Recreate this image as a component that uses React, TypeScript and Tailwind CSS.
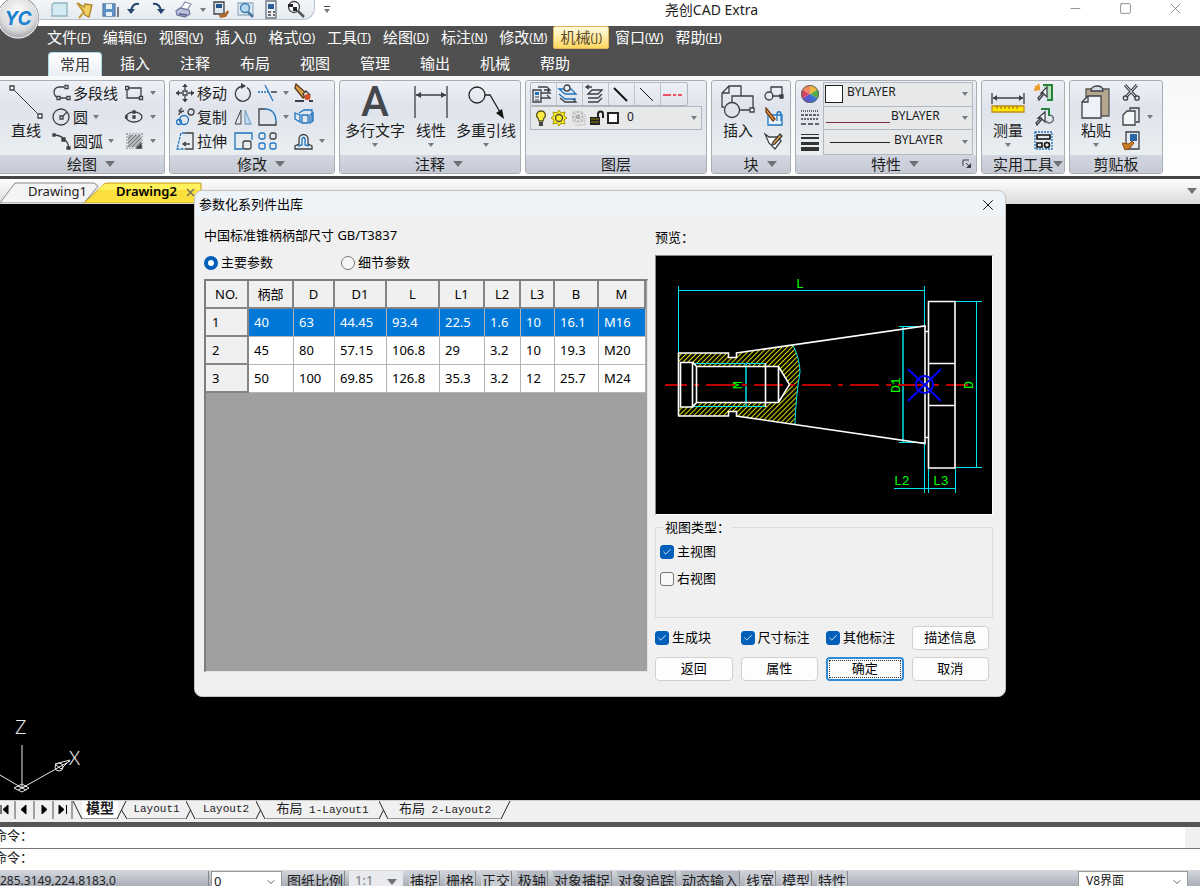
import { useState } from 'react'
import type { ReactNode } from 'react'
import clsx from 'clsx'
import { Check, ChevronDown, Minus, Square, X } from 'lucide-react'

const INK = '#3c4046'
const BLUE = '#1f74c0'

function Icon({
  w = 20,
  h = 20,
  children,
}: {
  w?: number
  h?: number
  children: ReactNode
}) {
  return (
    <svg
      width={w}
      height={h}
      viewBox={`0 0 ${w} ${h}`}
      fill="none"
      stroke={INK}
      strokeWidth="1.3"
      className="shrink-0"
      aria-hidden="true"
    >
      {children}
    </svg>
  )
}

function Caret({ big = false }: { big?: boolean }) {
  return big ? (
    <svg width="10" height="6" className="shrink-0" aria-hidden="true">
      <path d="M0 0h10L5 6z" fill="#6f7276" />
    </svg>
  ) : (
    <svg width="6" height="4" className="shrink-0" aria-hidden="true">
      <path d="M0 0h6L3 4z" fill="#777a7e" />
    </svg>
  )
}

/* ---------- small ribbon icons ---------- */

const icons = {
  polyline: (
    <Icon>
      <path d="M12 4H7a5 5 0 0 0-5 5q0 5 5 6M5 15h10" />
      <path d="M13 2.500h3v3h-3zM5 13.500h3v3H5zM15 13.500h3v3h-3z" fill="#fff" />
    </Icon>
  ),
  circle: (
    <Icon>
      <circle cx="9" cy="10" r="8" />
      <path d="M8 9h3v3H8zM10 10l5-5" />
    </Icon>
  ),
  arc: (
    <Icon>
      <path d="M2 4c8 0 14 6 15 13" />
      <path d="M1 3h2v2H1zM10 7h3v3h-3zM15 16h3v2h-3z" fill={INK} />
    </Icon>
  ),
  rect: (
    <Icon>
      <path d="M2 5h14v10H2z" />
      <path d="M0.500 3.500h3v3h-3zM14.500 13.500h3v3h-3z" fill="#fff" />
    </Icon>
  ),
  ellipse: (
    <Icon>
      <ellipse cx="9" cy="10" rx="8" ry="5" />
      <path d="M8 9h2v2H8zM0 9h2v2H0zM8 4h2v2H8z" fill={INK} />
    </Icon>
  ),
  hatch: (
    <Icon>
      <path d="M3 4h13v12H3z" fill="#b4b8bd" stroke="none" />
      <path
        d="M3 8l4-4M3 12l8-8M3 16L15 4M7 16l9-9M11 16l5-5"
        stroke="#6c7075"
        strokeWidth="1"
      />
      <path d="M1 3h17M1 17h17M2 2v16M17 2v16" stroke="#8c9095" strokeWidth="1" strokeDasharray="2 1" />
      <path d="M16 13v4h-4z" fill={INK} />
    </Icon>
  ),
  move: (
    <Icon>
      <path d="M7 8h4v4H7zM9 1v6M9 13v6M0 10h6M12 10h6" />
      <path d="M6 4l3-3 3 3zM6 16l3 3 3-3zM3 7l-3 3 3 3zM15 7l3 3-3 3z" fill={INK} stroke="none" />
    </Icon>
  ),
  copy: (
    <Icon>
      <circle cx="8" cy="13" r="4.500" stroke={BLUE} />
      <circle cx="3" cy="15" r="2.500" stroke={BLUE} />
      <circle cx="15" cy="5" r="3" />
      <path d="M3 8q0-4 5-4M6 1L3 4l3 2" />
    </Icon>
  ),
  stretch: (
    <Icon>
      <path d="M9 2h8v16H9" />
      <path d="M9 2H5L1 18h8" stroke={BLUE} strokeDasharray="3 1" />
      <path d="M14 13H8M10 11l-3 2 3 2" />
    </Icon>
  ),
  rotate: (
    <Icon>
      <path d="M7 3.500a7.500 7.500 0 1 0 6 1" />
      <path d="M7 0l5 3-5 3z" fill={INK} stroke="none" />
    </Icon>
  ),
  mirror: (
    <Icon>
      <path d="M7 3v14H1z" strokeWidth="1" />
      <path d="M11 3v14h6z" fill="#bcdcf2" stroke="#86abc8" />
    </Icon>
  ),
  scale: (
    <Icon>
      <path d="M9 18H1V2h17v7" stroke={BLUE} />
      <rect x="9" y="10" width="8" height="8" rx="2" />
    </Icon>
  ),
  trim: (
    <Icon>
      <path d="M0 9h11" stroke={BLUE} strokeDasharray="2 1" />
      <path d="M7 2l8 16" stroke={BLUE} />
      <path d="M13 9h6" />
    </Icon>
  ),
  fillet: (
    <Icon>
      <path d="M7 2H1v16h17v-4" />
      <path d="M7 2c7 0 11 5 11 12" stroke={BLUE} />
    </Icon>
  ),
  array: (
    <Icon>
      <rect x="1" y="2" width="6" height="6" rx="2" stroke={BLUE} />
      <rect x="1" y="12" width="6" height="6" rx="2" stroke={BLUE} />
      <rect x="12" y="2" width="6" height="6" rx="2" />
      <rect x="12" y="12" width="6" height="6" rx="2" stroke={BLUE} />
    </Icon>
  ),
  erase: (
    <Icon>
      <path d="M2 1l11 10-4 4L1 5z" fill="#dca04a" stroke="#5a3a18" />
      <path d="M9 11l3-3 4 4-4 4z" fill="#f3e9d0" />
      <circle cx="13.500" cy="14" r="3" fill="#d4532a" stroke="none" />
      <path d="M1 18h9M15 18h4" strokeWidth="2" />
    </Icon>
  ),
  explode: (
    <Icon>
      <path d="M5 6l5-3h8v3M18 6v8" stroke={BLUE} />
      <path d="M8 8h6v8H8zM16 8l3-2v8l-3 2zM1 6l5 2v7l-5-3z" stroke={BLUE} />
    </Icon>
  ),
  offset: (
    <Icon>
      <path d="M1 18h17v-3l-4-2V8a4.500 4.500 0 0 0-9 0v5l-4 2z" />
      <path d="M4 15l4-1V8a1.500 1.500 0 0 1 3 0v6l4 1" stroke={BLUE} />
    </Icon>
  ),
  block: (
    <Icon>
      <path d="M7 9V4h11v9H8" />
      <circle cx="5" cy="13" r="4" />
      <path d="M16 12h3v3h-3z" fill={INK} />
    </Icon>
  ),
  blockEdit: (
    <Icon>
      <path d="M4 8h14v10H4z" stroke={BLUE} fill="#e8f1fa" />
      <path d="M13 14V7c0-3 4-3 4 0v7" stroke={BLUE} />
      <path d="M2 1l9 11-2 2-7-9z" fill="#e3a646" stroke="#7b3b18" />
    </Icon>
  ),
  attribute: (
    <Icon>
      <path d="M1 3l4 3h9l3 4-6 8-6-6z" fill="#fff" />
      <path d="M18 5l-7 8-3 1 1-3 7-8z" fill="#e59b3c" />
    </Icon>
  ),
  quickSelect: (
    <Icon>
      <path d="M9 2h9v15h-5" stroke="#27833b" strokeWidth="2" fill="#b8e4bd" />
      <path d="M13 4v10l-3-3-5 6-1-2 5-5H7z" fill="#fff" />
      <path d="M1 3l5 4M5 1L2 8M0 7l6-3" stroke="#ec9a24" strokeWidth="2" />
    </Icon>
  ),
  selectAll: (
    <Icon>
      <path d="M7 2h8v7" stroke="#27833b" strokeWidth="2" />
      <path d="M11 5v10l-3-3-5 6-1-2 5-5H4z" fill="#fff" />
      <path d="M12 14a4 4 0 1 0 4-6" stroke="#6c7075" strokeWidth="1.600" />
    </Icon>
  ),
  idPoint: (
    <Icon>
      <path d="M1 1h17v17H1z" stroke={BLUE} strokeDasharray="2 1" />
      <path d="M3 4h13v4H3zM3 12h5v4H3z" stroke="#111" strokeWidth="1.600" />
      <circle cx="13" cy="14" r="2.500" stroke="#111" strokeWidth="1.600" />
    </Icon>
  ),
  cut: (
    <Icon>
      <path d="M3 2l11 12M15 2L4 14" strokeWidth="3" />
      <path d="M3 2l11 12M15 2L4 14" stroke="#f2f4f6" strokeWidth="1" />
      <circle cx="3.500" cy="15" r="2.200" />
      <circle cx="15" cy="15" r="2.200" />
    </Icon>
  ),
  copyClip: (
    <Icon>
      <path d="M8 3V1h9v14h-3" />
      <path d="M1 8l4-4h8v14H1z" fill="#f4f6f8" />
    </Icon>
  ),
  matchProps: (
    <Icon>
      <path d="M4 1h13v17H4z" fill="#e6eaef" />
      <path d="M8 3h7v7H8z" fill="#2b67a5" stroke="none" />
      <path d="M0 12l7 1 3-3 2 2-4 5-5 2z" fill="#c97b2c" stroke="#8b4d14" strokeWidth="1" />
    </Icon>
  ),
}

/* ---------- header ---------- */

function QuickIcons() {
  return (
    <div className="flex h-5 items-center gap-[5px] rounded-br-xl border-b border-r border-[#b9c1c9] bg-linear-to-b from-[#f3f6f9] to-[#e6ebf0] pl-[30px] pr-2">
      <button aria-label="新建">
        <Icon>
          <path d="M4 3h13v13H2V5z" fill="#d4ebf2" stroke="#8fb4c4" />
        </Icon>
      </button>
      <button aria-label="打开">
        <Icon>
          <path d="M3 3l6 4 1-3 7 1-3 12-4-2z" fill="#f2cf63" stroke="#a9822b" />
          <path d="M2 3l7 9-5 6" stroke="#c49c3c" strokeWidth="2" />
        </Icon>
      </button>
      <button aria-label="保存">
        <Icon>
          <path d="M3 4h12v12H3z" fill="#5f93cc" stroke="#5b7fa8" />
          <path d="M6 4h6v5H6zM6 12h6v4H6z" fill="#e8f0f8" stroke="none" />
          <path d="M18 7v10" />
        </Icon>
      </button>
      <button aria-label="撤销">
        <Icon>
          <path d="M14 4c-5-1-8 3-8 8" stroke="#27456f" strokeWidth="2" />
          <path d="M2 9l4 5 4-5z" fill="#27456f" stroke="none" />
        </Icon>
      </button>
      <button aria-label="重做">
        <Icon>
          <path d="M3 4c5-1 8 3 8 8" stroke="#27456f" strokeWidth="2" />
          <path d="M7 9l4 5 4-5z" fill="#27456f" stroke="none" />
        </Icon>
      </button>
      <button aria-label="打印" className="flex items-center gap-[5px]">
        <Icon>
          <path d="M6 8l4-6 6 2-4 6z" fill="#fff" stroke="#8d93b4" />
          <path d="M1 11l4-3 9 2 1 4-5 3-8-2z" fill="#b9bfdb" stroke="#767ca3" />
          <path d="M4 14l8 1" stroke="#555b86" />
        </Icon>
        <Caret />
      </button>
      <button aria-label="特性匹配">
        <Icon>
          <path d="M3 2h10v12H3z" fill="#dfe6ee" />
          <path d="M5 4h6v4H5z" fill="#25578f" stroke="none" />
          <path d="M8 15l6-2 3-3 1 2-3 5-6 1z" fill="#b2662a" stroke="none" />
        </Icon>
      </button>
      <button aria-label="预览">
        <Icon>
          <path d="M2 3h15v12H2z" fill="#dce9f3" stroke="#9db2c4" />
          <circle cx="9" cy="8" r="4.500" fill="#b3d8f0" stroke="#3e78ac" />
          <path d="M12 12l5 5" stroke="#4877a0" strokeWidth="2.500" />
        </Icon>
      </button>
      <button aria-label="特性">
        <Icon>
          <path d="M5 1h10v17H5z" fill="#eef1f4" stroke="#6c7580" />
          <path d="M7 4h6v5H7z" fill="#2b5f9a" stroke="none" />
          <path d="M7 12h3M7 15h3M12 12h2M12 15h2" />
        </Icon>
      </button>
      <button aria-label="查找">
        <Icon>
          <circle cx="8" cy="7" r="5.500" fill="#fff" />
          <path d="M2 4h5v3H2zM7 7h4v4H7z" fill="#222" stroke="none" />
          <path d="M12 11l6 6" stroke="#555" strokeWidth="2.500" />
        </Icon>
      </button>
    </div>
  )
}

const menus = [
  ['文件', 'F'],
  ['编辑', 'E'],
  ['视图', 'V'],
  ['插入', 'I'],
  ['格式', 'O'],
  ['工具', 'T'],
  ['绘图', 'D'],
  ['标注', 'N'],
  ['修改', 'M'],
  ['机械', 'J'],
  ['窗口', 'W'],
  ['帮助', 'H'],
]

const ribbonTabs = ['常用', '插入', '注释', '布局', '视图', '管理', '输出', '机械', '帮助']

function Header() {
  const [tab, setTab] = useState('常用')

  return (
    <header className="relative">
      <div className="flex h-[26px] items-start bg-white pl-5">
        <QuickIcons />
        <button aria-label="自定义" className="ml-2 mt-[6px] flex w-[8px] flex-col items-center gap-[2px]">
          <span className="h-px w-[6px] bg-[#444]" />
          <Caret />
        </button>
        <h1 className="flex-1 pl-[42px] text-center text-[14px] leading-5 text-[#222]">
          尧创CAD Extra
        </h1>
        <div className="flex h-4 items-center text-[#777]">
          <button aria-label="最小化" className="flex w-[50px] justify-center">
            <Minus size={15} strokeWidth={1.2} />
          </button>
          <button aria-label="最大化" className="flex w-[50px] justify-center">
            <Square size={13} strokeWidth={1.5} />
          </button>
          <button aria-label="关闭" className="flex w-[50px] justify-center">
            <X size={17} strokeWidth={1.2} />
          </button>
        </div>
      </div>

      <div className="bg-[#505050] text-[15px] text-white">
        <nav className="flex h-[26px] items-start pl-[41px]">
          {menus.map(([name, key]) => (
            <button
              key={name}
              className={clsx(
                'flex h-[23px] items-center px-[6px] whitespace-nowrap',
                key === 'J' &&
                  'rounded-xs border border-[#e0b85a] bg-linear-to-b from-[#fffbe0] to-[#ffd75c] text-[#5a4a2a]',
              )}
            >
              <span className="text-[15px]">{name}</span>
              <span className="text-[12px]">
                (<u>{key}</u>)
              </span>
            </button>
          ))}
        </nav>
        <nav className="flex h-6 pl-[45px]">
          {ribbonTabs.map((name) => (
            <button
              key={name}
              onClick={() => setTab(name)}
              className={clsx(
                'mx-[3px] w-[54px] rounded-t-sm pb-[2px] text-[15px] leading-5',
                tab === name && 'border border-b-0 border-[#a9dce8] bg-linear-to-b from-white to-[#e9eef4] text-[#333]',
              )}
            >
              {name}
            </button>
          ))}
        </nav>
      </div>

      {/* Application button, hangs over the menu bar */}
      <button aria-label="应用程序" className="absolute left-[-3px] top-[-8px]">
        <svg width="48" height="48" viewBox="0 0 48 48">
          <defs>
            <radialGradient id="orb" cx="0.5" cy="0.35" r="0.65">
              <stop offset="0" stopColor="#ffffff" />
              <stop offset="0.7" stopColor="#d9dadc" />
              <stop offset="1" stopColor="#a2a5a8" />
            </radialGradient>
          </defs>
          <circle cx="21" cy="26" r="21" fill="#6a6c6e" />
          <circle cx="21" cy="26" r="20" fill="url(#orb)" stroke="#f4f4f4" />
          <text
            x="21"
            y="33"
            textAnchor="middle"
            fontFamily="Inter, sans-serif"
            fontWeight="700"
            fontStyle="italic"
            fontSize="19"
            fill="#1b82d2"
          >
            YC
          </text>
        </svg>
      </button>
    </header>
  )
}

/* ---------- ribbon ---------- */

function Group({
  title,
  caret = true,
  tight = false,
  launcher = false,
  width,
  children,
}: {
  title: string
  caret?: boolean
  tight?: boolean
  launcher?: boolean
  width: string
  children: ReactNode
}) {
  return (
    <section
      className={clsx(
        'relative flex h-[94px] shrink-0 flex-col overflow-hidden rounded-[3px] border border-[#a9aeb5] bg-linear-to-b from-[#eef0f5] via-[#dfe3ec] via-30% to-[#eef3f2]',
        width,
      )}
    >
      <div className="flex min-h-0 flex-1">{children}</div>
      <h2
        className={clsx(
          'flex h-[18px] items-center justify-center bg-linear-to-b from-[#d3d7e2] to-[#c6cad3] text-[15px] leading-[18px]',
          tight ? 'gap-0' : 'gap-2',
        )}
      >
        <span className="whitespace-nowrap">{title}</span>
        {caret && (
          <span className={tight ? '-mr-[10px]' : '-mr-[18px]'}>
            <Caret big />
          </span>
        )}
      </h2>
      {launcher && (
        <button aria-label={`${title}设置`} className="absolute bottom-[4px] right-[4px]">
          <Icon w={10} h={10}>
            <path d="M1 7V1h6M4 4l4 4" strokeWidth="1" />
            <path d="M9 4v5H4z" fill={INK} stroke="none" />
          </Icon>
        </button>
      )}
    </section>
  )
}

function BigButton({
  label,
  caret = true,
  width,
  children,
}: {
  label: string
  caret?: boolean
  width: string
  children: ReactNode
}) {
  return (
    <button className={clsx('flex flex-col items-center pt-[3px] text-[15px]', width)}>
      <span className="flex h-9 items-center">{children}</span>
      <span className="leading-5 whitespace-nowrap">{label}</span>
      {caret && (
        <span className="pt-[3px]">
          <Caret />
        </span>
      )}
    </button>
  )
}

type Tool = { icon: ReactNode; name: string; text?: boolean; caret?: boolean }

function ToolColumn({ tools, width }: { tools: Tool[]; width: string }) {
  return (
    <div className={clsx('flex flex-col', width)}>
      {tools.map((t) => (
        <button
          key={t.name}
          aria-label={t.name}
          className="flex h-6 items-center gap-px text-[15px] whitespace-nowrap"
        >
          {t.icon}
          {t.text && <span>{t.name}</span>}
          {t.caret && (
            <span className="ml-1">
              <Caret />
            </span>
          )}
        </button>
      ))}
    </div>
  )
}

function LayerPanel() {
  return (
    <div className="flex w-full flex-col px-1 pt-px">
      <div className="flex h-6 w-[158px] divide-x divide-[#bfc5cc] rounded-xs border border-[#b2b8bf]">
        <button aria-label="图层特性" className="w-[26px]">
          <Icon w={24}>
            <path d="M7 3h9l3 3h-6M10 9h9l-3-3M10 14h9l-3-3" />
            <path d="M2 6h8v12H2z" fill="#e4ebf2" />
            <path d="M4 8h4v3H4z" fill={BLUE} stroke="none" />
            <path d="M4 13h4M4 16h4" strokeWidth="1" />
          </Icon>
        </button>
        <button aria-label="图层状态" className="w-[26px]">
          <Icon w={24}>
            <path d="M2 5h12l5 5H8zM2 10l6 5h11" stroke={BLUE} />
            <path d="M3 14l5 4h11l-3-3" />
            <circle cx="10" cy="4" r="3" fill="#eef1f5" />
          </Icon>
        </button>
        <button aria-label="上一个图层" className="w-[26px]">
          <Icon w={24}>
            <path d="M9 3H4M6 1L3 3l3 2" />
            <path d="M9 6h10l-4 4H5zM5 14h10l4-4M5 18h10l4-4" />
          </Icon>
        </button>
        <button aria-label="粗线" className="w-[26px]">
          <Icon w={24}>
            <path d="M5 4l13 13" stroke="#111" strokeWidth="2" />
          </Icon>
        </button>
        <button aria-label="细线" className="w-[26px]">
          <Icon w={24}>
            <path d="M5 4l13 13" stroke="#111" strokeWidth="1" />
          </Icon>
        </button>
        <button aria-label="点划线" className="w-[26px]">
          <Icon w={24}>
            <path d="M2 11h19" stroke="#ee2233" strokeDasharray="8 2 3 2" />
          </Icon>
        </button>
      </div>
      <div className="flex h-6 items-center border border-[#b2b8bf] bg-[#e6e8ea] pl-[2px] pr-1">
        <Icon w={16} h={18}>
          <path d="M8 2a4 4 0 0 1 3 7l-1 3H6L5 9a4 4 0 0 1 3-7z" fill="#ffee44" stroke="#5a5620" />
          <path d="M6 14h4M6 16h4" stroke="#111" />
        </Icon>
        <Icon w={20} h={18}>
          <path
            d="M10 1l2 3 4-1-1 4 3 2-3 2 1 4-4-1-2 3-2-3-4 1 1-4-3-2 3-2-1-4 4 1z"
            fill="#ffee22"
            stroke="#a39400"
            strokeWidth="1"
          />
          <circle cx="10" cy="9" r="3.500" fill="#ffee22" stroke="#444" />
        </Icon>
        <Icon w={20} h={18}>
          <path d="M4 3h10v10H4zM16 5v11H6" stroke="#c4c4c4" strokeWidth="1" />
          <path d="M9 2v12M3 8h12M5 4l8 8M13 4l-8 8" stroke="#aaa" strokeDasharray="2 1" />
        </Icon>
        <Icon w={18} h={18}>
          <path d="M1 8h10v8H1z" fill="#222" stroke="none" />
          <path d="M9 8V5a2.500 2.500 0 0 1 5 0v4" stroke="#222" strokeWidth="2" />
          <path d="M2 10h8M2 13h8" stroke="#8d8300" strokeWidth="1" />
        </Icon>
        <span className="h-3 w-3 border-2 border-[#222] bg-white" />
        <select
          aria-label="当前图层"
          className="ml-2 min-w-0 flex-1 appearance-none bg-transparent pb-[2px] text-[12px] leading-4 outline-none"
        >
          <option>0</option>
        </select>
        <Caret />
      </div>
    </div>
  )
}

function PropertyPanel() {
  return (
    <div className="flex w-full pl-[5px] pr-[3px] pt-px">
      <div className="flex w-[22px] flex-col">
        <span className="flex h-6 items-center">
          <svg width="18" height="18" viewBox="0 0 18 18">
            <path d="M9 9L9 0A9 9 0 0 1 16.800 4.500z" fill="#f0b840" />
            <path d="M9 9l7.800-4.500a9 9 0 0 1 0 9z" fill="#55ae46" />
            <path d="M9 9l7.800 4.500A9 9 0 0 1 9 18z" fill="#3b74d0" />
            <path d="M9 9v9a9 9 0 0 1-7.800-4.500z" fill="#5a58ca" />
            <path d="M9 9l-7.800 4.500a9 9 0 0 1 0-9z" fill="#d14560" />
            <path d="M9 9L1.200 4.500A9 9 0 0 1 9 0z" fill="#f08b60" />
            <circle cx="9" cy="9" r="8.500" fill="none" stroke="#666" />
          </svg>
        </span>
        <span className="flex h-6 items-center">
          <Icon w={18} h={18}>
            <path d="M0 2h18" strokeDasharray="1 1" />
            <path d="M0 6h18" strokeDasharray="3 1" />
            <path d="M0 10h18" strokeDasharray="2 1" />
            <path d="M0 15h18" strokeDasharray="5 2" />
          </Icon>
        </span>
        <span className="flex h-6 items-center">
          <svg width="18" height="18">
            <path d="M0 1h18v1H0zM0 4h18v2H0zM0 9h18v3H0zM0 14h18v4H0z" fill="#333" />
          </svg>
        </span>
      </div>
      <div className="flex flex-1 flex-col border border-[#b2b8bf] bg-[#e6e8ea] text-[12px] leading-4">
        <div className="flex h-6 items-center border-b border-[#b2b8bf] pr-1">
          <span className="mx-px h-[18px] w-[18px] border border-[#222] bg-white" />
          <select
            aria-label="颜色"
            className="ml-[3px] min-w-0 flex-1 appearance-none bg-transparent pb-1 outline-none"
          >
            <option>BYLAYER</option>
          </select>
          <Caret />
        </div>
        <div className="flex h-6 items-center border-b border-[#b2b8bf] pr-1">
          <span className="ml-[2px] mt-2 h-px w-[64px] bg-[#7a2a44]" />
          <select
            aria-label="线型"
            className="ml-px min-w-0 flex-1 appearance-none bg-transparent pb-1 outline-none"
          >
            <option>BYLAYER</option>
          </select>
          <Caret />
        </div>
        <div className="flex h-6 items-center pr-1">
          <span className="ml-[6px] h-px w-[60px] bg-[#222]" />
          <select
            aria-label="线宽"
            className="ml-1 min-w-0 flex-1 appearance-none bg-transparent pb-1 outline-none"
          >
            <option>BYLAYER</option>
          </select>
          <Caret />
        </div>
      </div>
    </div>
  )
}

function Ribbon() {
  return (
    <div className="flex gap-1 overflow-hidden border-b-[3px] border-[#454545] bg-linear-to-b from-[#f6f8f9] to-white pb-[2px] pt-1">
      <Group title="绘图" width="w-[165px] border-l-0 rounded-l-none">
        <BigButton label="直线" caret={false} width="w-[52px]">
          <Icon w={34} h={34}>
            <path d="M3 3l28 28" strokeWidth="1" />
            <path d="M1 1h4v4H1zM29 29h4v4h-4z" fill="#fff" />
          </Icon>
        </BigButton>
        <ToolColumn
          width="w-[73px]"
          tools={[
            { icon: icons.polyline, name: '多段线', text: true },
            { icon: icons.circle, name: '圆', text: true, caret: true },
            { icon: icons.arc, name: '圆弧', text: true, caret: true },
          ]}
        />
        <ToolColumn
          width="w-8"
          tools={[
            { icon: icons.rect, name: '矩形', caret: true },
            { icon: icons.ellipse, name: '椭圆', caret: true },
            { icon: icons.hatch, name: '图案填充', caret: true },
          ]}
        />
      </Group>

      <Group title="修改" width="w-[166px]">
        <div className="flex pl-[6px]">
          <ToolColumn
            width="w-[58px]"
            tools={[
              { icon: icons.move, name: '移动', text: true },
              { icon: icons.copy, name: '复制', text: true },
              { icon: icons.stretch, name: '拉伸', text: true },
            ]}
          />
          <ToolColumn
            width="w-6"
            tools={[
              { icon: icons.rotate, name: '旋转' },
              { icon: icons.mirror, name: '镜像' },
              { icon: icons.scale, name: '缩放' },
            ]}
          />
          <ToolColumn
            width="w-9"
            tools={[
              { icon: icons.trim, name: '修剪', caret: true },
              { icon: icons.fillet, name: '圆角', caret: true },
              { icon: icons.array, name: '阵列' },
            ]}
          />
          <ToolColumn
            width="w-8"
            tools={[
              { icon: icons.erase, name: '删除' },
              { icon: icons.explode, name: '分解' },
              { icon: icons.offset, name: '偏移', caret: true },
            ]}
          />
        </div>
      </Group>

      <Group title="注释" width="w-[182px]">
        <BigButton label="多行文字" width="w-[70px]">
          <span className="font-['Roboto'] text-[42px] font-medium leading-9 text-[#44474c]">A</span>
        </BigButton>
        <BigButton label="线性" width="w-[42px]">
          <Icon w={34} h={34}>
            <path d="M1 1v32M33 1v32M2 10h30" />
            <path d="M2 10l5-3v6zM32 10l-5-3v6z" fill={INK} stroke="none" />
          </Icon>
        </BigButton>
        <BigButton label="多重引线" width="w-[68px]">
          <Icon w={38} h={34}>
            <circle cx="10" cy="10" r="8" stroke="#222" />
            <path d="M18 10h5l10 17" stroke="#222" />
            <path d="M37 34l-8-6 6-4z" fill="#111" stroke="none" />
          </Icon>
        </BigButton>
      </Group>

      <Group title="图层" caret={false} width="w-[182px]">
        <LayerPanel />
      </Group>

      <Group title="块" width="w-[80px]">
        <BigButton label="插入" caret={false} width="w-[52px]">
          <Icon w={34} h={34}>
            <path d="M3 22H1V8l7-7h12v10M8 1v7H1" />
            <path d="M11 17v-6h21v14H19" />
            <circle cx="11" cy="25" r="7.500" />
            <path d="M29 23h4v4h-4z" fill="#fff" />
          </Icon>
        </BigButton>
        <ToolColumn
          width="w-6"
          tools={[
            { icon: icons.block, name: '创建块' },
            { icon: icons.blockEdit, name: '编辑块' },
            { icon: icons.attribute, name: '编辑属性' },
          ]}
        />
      </Group>

      <Group title="特性" launcher width="w-[182px]">
        <PropertyPanel />
      </Group>

      <Group title="实用工具" tight width="w-[84px]">
        <BigButton label="测量" width="w-[52px]">
          <Icon w={34} h={34}>
            <path d="M1 8v11M33 8v11M2 13h30" />
            <path d="M2 13l4-3v6zM32 13l-4-3v6z" fill={INK} stroke="none" />
            <path d="M1 21h32v6H1z" fill="#ffe800" stroke="#c18a20" />
            <path d="M6 21v3M10 21v3M14 21v3M18 21v3M22 21v3M26 21v3" stroke="#8b6a10" strokeWidth="1" />
          </Icon>
        </BigButton>
        <ToolColumn
          width="w-6"
          tools={[
            { icon: icons.quickSelect, name: '快速选择' },
            { icon: icons.selectAll, name: '全部选择' },
            { icon: icons.idPoint, name: '点坐标' },
          ]}
        />
      </Group>

      <Group title="剪贴板" caret={false} width="w-[94px]">
        <BigButton label="粘贴" width="w-[52px]">
          <Icon w={30} h={34}>
            <path d="M5 4h23v27H5z" fill="#b5a78f" stroke="#555" />
            <path d="M10 6c0-3 2-5 6-5s6 2 6 5z" fill="#d6dbe0" />
            <path d="M1 17l6-6h13v22H1z" fill="#eef2f8" />
            <path d="M7 11v6H1" />
          </Icon>
        </BigButton>
        <ToolColumn
          width="w-8"
          tools={[
            { icon: icons.cut, name: '剪切' },
            { icon: icons.copyClip, name: '复制到剪贴板', caret: true },
            { icon: icons.matchProps, name: '特性刷' },
          ]}
        />
      </Group>
    </div>
  )
}

function DocumentTabs() {
  return (
    <div className="flex h-[25px] items-end bg-linear-to-b from-white to-[#d9d9d9] pb-[2px] font-['Noto_Sans'] text-[13px]">
      <div className="relative flex h-5 w-[204px] items-center">
        <svg width="204" height="21" className="absolute inset-0" aria-hidden="true">
          <path d="M0 21L15 1h79l4 3-14 17z" fill="#f4f4f4" stroke="#888" />
          <path d="M84 21L102 4q2-3 6-3h93v20z" fill="#fbdf3c" stroke="#c5a32c" />
          <path d="M98 8l5-5q2-1 5-1h92v6z" fill="#fff15c" />
        </svg>
        <button className="relative ml-7 w-[60px] text-left text-[#222]">Drawing1</button>
        <button className="relative ml-[28px] w-[60px] text-left font-semibold text-black">Drawing2</button>
        <button aria-label="关闭标签" className="relative ml-2 text-[#666]">
          <X size={13} strokeWidth={2} />
        </button>
      </div>
      <button aria-label="标签列表" className="mb-2 ml-auto mr-[3px]">
        <Caret big />
      </button>
    </div>
  )
}

/* ---------- dialog ---------- */

const columns = [
  { name: 'NO.', width: 'w-[43px]' },
  { name: '柄部', width: 'w-[45px]' },
  { name: 'D', width: 'w-[41px]' },
  { name: 'D1', width: 'w-[52px]' },
  { name: 'L', width: 'w-[53px]' },
  { name: 'L1', width: 'w-[45px]' },
  { name: 'L2', width: 'w-[36px]' },
  { name: 'L3', width: 'w-[34px]' },
  { name: 'B', width: 'w-[44px]' },
  { name: 'M', width: 'w-[47px]' },
]

const rows = [
  ['40', '63', '44.45', '93.4', '22.5', '1.6', '10', '16.1', 'M16'],
  ['45', '80', '57.15', '106.8', '29', '3.2', '10', '19.3', 'M20'],
  ['50', '100', '69.85', '126.8', '35.3', '3.2', '12', '25.7', 'M24'],
]

function SizeTable() {
  const [selected, setSelected] = useState(0)

  return (
    <div className="flex-1 border-2 border-b border-r border-[#7d7d7d] border-b-[#e3e3e3] border-r-[#e3e3e3] bg-[#a0a0a0]">
      <table className="table-fixed border-separate border-spacing-0 font-['Noto_Sans','Noto_Sans_CJK_SC',sans-serif] text-[13px] leading-5">
        <thead>
          <tr className="h-7 bg-[#f0f0f0]">
            {columns.map((c) => (
              <th
                key={c.name}
                className={clsx('border-b-2 border-r-2 border-[#858585] p-0 text-center font-normal', c.width)}
              >
                {c.name}
              </th>
            ))}
          </tr>
        </thead>
        <tbody>
          {rows.map((row, i) => (
            <tr
              key={i}
              onClick={() => setSelected(i)}
              className={clsx('h-7', selected === i ? 'bg-[#0078d7] text-white' : 'bg-white')}
            >
              <th className="border-b-2 border-r-2 border-[#858585] bg-[#f0f0f0] p-0 pl-[6px] text-left font-normal text-black">
                {i + 1}
              </th>
              {row.map((v, j) => (
                <td key={j} className="border-b border-r border-[#b4b4b4] p-0 pb-[2px] pl-[5px]">
                  {v}
                </td>
              ))}
            </tr>
          ))}
        </tbody>
      </table>
    </div>
  )
}

function Preview() {
  return (
    <div className="border border-[#8a8a8a] border-b-white border-r-white bg-black">
      <svg viewBox="656 256 336 258" className="block w-full" fill="none" strokeWidth="1">
        <defs>
          <pattern id="section" width="3.5" height="3.5" patternUnits="userSpaceOnUse" patternTransform="rotate(45)">
            <path d="M0.500 0v3.500" stroke="#e6e600" strokeWidth="1" />
          </pattern>
        </defs>

        {/* Hatched section */}
        <path
          d="M678 353H728V357H736V353L793 345Q800 360 800 372Q796 395 795 424L736 416V412H728V416H678V407H693L697 403H778L790 385L778 367H697L693 362H678z"
          fill="url(#section)"
        />

        {/* Dimension lines */}
        <g stroke="#00e5ee">
          <path d="M678.500 286V353M924.500 286V326M678 290.500H924" />
          <path d="M955 301.500H982M955 467.500H982M976.500 301V468" />
          <path d="M903 326V443" strokeWidth="2" stroke="#00a8ae" />
          <path d="M899 326.500H925M899 442.500H925" />
          <path d="M924.500 443V493M928.500 468V493M955.500 468V493M894 488.500H956" />
          <path d="M694 363.500H766M694 406.500H766" />
          <path d="M746 363V407" strokeWidth="2" stroke="#00a8ae" />
          <path d="M793 345Q800 360 800 372Q796 395 795 424" />
        </g>

        <path
          d="M665 385H968"
          stroke="#c00000"
          strokeWidth="2"
          strokeDasharray="29 7 5 7"
          strokeDashoffset="7"
        />

        {/* Part outline */}
        <g stroke="#fff" strokeWidth="1.6">
          <path d="M678.500 353V416M678 353H728.500V357.500H736.500V353L925 326V443.500L736.500 416V411.500H728.500V416H678" />
          <path d="M680.500 362.500H692.500V407H680.500zM692.500 362L696.500 366.500V402.500L692.500 407" />
          <path d="M696 366.500H778.500L789.500 384.500L778.500 402.500H696M778.500 366V403M765.500 363V407" />
          <path d="M925 331.500H928M925 437.500H928" />
          <path d="M928.500 301.500H955V468H928.500zM928.500 363.500H955M928.500 405.500H955" />
        </g>

        {/* Insertion point */}
        <g stroke="#0000ff" strokeWidth="2">
          <circle cx="924.500" cy="384.500" r="8.500" />
          <path d="M908 369L941 401M941 369L908 401" />
        </g>

        <g fill="#00ff00" fontFamily="'Liberation Mono', monospace" fontSize="13">
          <text x="796" y="288">L</text>
          <text x="894" y="485">L2</text>
          <text x="933" y="485">L3</text>
          <text transform="translate(742 389) rotate(-90)">M</text>
          <text transform="translate(900 393) rotate(-90)">D1</text>
          <text transform="translate(973 389) rotate(-90)">D</text>
        </g>
      </svg>
    </div>
  )
}

function CheckBox({ label, defaultChecked = false }: { label: string; defaultChecked?: boolean }) {
  return (
    <label className="flex h-6 items-center gap-[3px] whitespace-nowrap">
      <span className="relative flex h-[14px] w-[14px]">
        <input
          type="checkbox"
          defaultChecked={defaultChecked}
          className="peer h-[14px] w-[14px] appearance-none rounded-[3px] border border-[#777] bg-[#f8f8f8] checked:border-[#005fb8] checked:bg-[#005fb8]"
        />
        <Check
          size={10}
          strokeWidth={2}
          className="pointer-events-none absolute left-[2px] top-[2px] hidden text-white peer-checked:block"
        />
      </span>
      {label}
    </label>
  )
}

function Radio({ label, defaultChecked = false }: { label: string; defaultChecked?: boolean }) {
  return (
    <label className="flex w-[137px] items-center gap-[3px]">
      <input
        type="radio"
        name="params"
        defaultChecked={defaultChecked}
        className="h-[14px] w-[14px] appearance-none rounded-full border border-[#777] bg-[#f6f6f6] checked:border-[4px] checked:border-[#005fb8] checked:bg-white"
      />
      {label}
    </label>
  )
}

function DialogButton({ children, primary = false }: { children: ReactNode; primary?: boolean }) {
  return (
    <button
      className={clsx(
        'h-6 rounded-sm border bg-[#fdfdfd] p-px',
        primary ? 'border-2 border-[#2f8ad8]' : 'border-[#d0d0d0]',
      )}
    >
      <span
        className={clsx(
          'flex h-full items-center justify-center',
          primary && 'border border-dotted border-[#333]',
        )}
      >
        {children}
      </span>
    </button>
  )
}

function PartDialog() {
  return (
    <div
      role="dialog"
      aria-labelledby="dialog-title"
      className="absolute inset-x-0 top-[190px] mx-auto w-[812px] rounded-lg border border-[#c4c4c4] bg-[#f0f0f0] text-[13px] text-black shadow-xl"
    >
      <div className="flex h-[27px] items-center justify-between rounded-t-lg bg-[#eef3f8] pl-1 pr-2">
        <h2 id="dialog-title">参数化系列件出库</h2>
        <button aria-label="关闭">
          <X size={18} strokeWidth={1.2} />
        </button>
      </div>
      <div className="flex gap-[7px] pb-[15px] pl-[9px] pr-3">
        <div className="flex flex-1 flex-col">
          <p className="pt-[7px] leading-5">中国标准锥柄柄部尺寸 GB/T3837</p>
          <div className="flex h-[34px] items-center pt-[2px]">
            <Radio label="主要参数" defaultChecked />
            <Radio label="细节参数" />
          </div>
          <SizeTable />
          <div className="h-[9px]" />
        </div>

        <div className="w-[338px]">
          <p className="pb-2 pt-[9px] leading-5">预览：</p>
          <Preview />
          <fieldset className="mt-[2px] h-[101px] border border-[#dcdcdc] px-1">
            <legend className="ml-1 px-px leading-5">视图类型：</legend>
            <div className="flex flex-col gap-[3px] pt-[3px]">
              <CheckBox label="主视图" defaultChecked />
              <CheckBox label="右视图" />
            </div>
          </fieldset>
          <div className="mt-2 grid grid-cols-4 gap-x-2 gap-y-[7px] pr-1">
            <CheckBox label="生成块" defaultChecked />
            <CheckBox label="尺寸标注" defaultChecked />
            <CheckBox label="其他标注" defaultChecked />
            <DialogButton>描述信息</DialogButton>
            <DialogButton>返回</DialogButton>
            <DialogButton>属性</DialogButton>
            <DialogButton primary>确定</DialogButton>
            <DialogButton>取消</DialogButton>
          </div>
        </div>
      </div>
    </div>
  )
}

/* ---------- drawing area and bottom bars ---------- */

function Canvas() {
  return (
    <main className="flex min-h-0 flex-1 items-end bg-black">
      <svg width="90" height="104" viewBox="0 695 90 104" fill="none" stroke="#e8e8e8" aria-hidden="true">
        <path d="M22 744V787M22 787L70 760M22 787L0 774M14 787l8-4 7 4-7 4zM18 785l8 4M26 785l-8 4" />
        <path d="M55 763l15-4-9 9z" />
        <circle cx="59" cy="766" r="4" />
        <g fill="#e8e8e8" stroke="none" fontFamily="'Noto Sans', sans-serif" fontWeight="300">
          <text x="15" y="733" fontSize="20">Z</text>
          <text x="69" y="764" fontSize="20">X</text>
        </g>
      </svg>
    </main>
  )
}

function Slant({ kind }: { kind: 'first' | 'active' | 'mid' | 'last' }) {
  const lines = {
    first: 'M0 0L9 18',
    active: 'M9 0L0 18M4.500 9L10 18',
    mid: 'M0 0L9 18M4.500 9L0 18',
    last: 'M9 0L0 18',
  }
  return (
    <svg width="10" height="18" fill="none" stroke="#222" aria-hidden="true">
      <path d={lines[kind]} />
    </svg>
  )
}

function LayoutTabs() {
  return (
    <div className="flex h-[22px] items-start border-t border-[#d0d0d0] bg-[#f0f0f0] font-['Liberation_Mono','Noto_Sans_CJK_SC',monospace] text-[11px] leading-[17px]">
      {['M1 4v9M8 4v9L3 8.500z', 'M8 4v9L3 8.500z', 'M5 4v9l5-4.500z', 'M3 4v9l5-4.500zM10.500 4v9'].map((d, i) => (
        <button
          key={d}
          aria-label={['首个', '上一个', '下一个', '末个'][i]}
          className={clsx('flex h-[18px] border-r-2 border-[#a0a0a0]', i === 0 ? 'w-4' : 'w-[19px] pl-[2px]')}
        >
          <svg width="14" height="18" fill="#000" stroke="#000">
            <path d={d} />
          </svg>
        </button>
      ))}
      <Slant kind="first" />
      <button className="-mx-px h-[18px] w-9 border-b border-[#999] bg-white text-[14px] font-bold">模型</button>
      <Slant kind="active" />
      <button className="h-[18px] w-[59px] border-b border-[#999]">Layout1</button>
      <Slant kind="mid" />
      <button className="h-[18px] w-[60px] border-b border-[#999]">Layout2</button>
      <Slant kind="mid" />
      <button className="h-[18px] w-[113px] border-b border-[#999]">
        <span className="text-[13px]">布局</span> 1-Layout1
      </button>
      <Slant kind="mid" />
      <button className="h-[18px] w-[112px] border-b border-[#999]">
        <span className="text-[13px]">布局</span> 2-Layout2
      </button>
      <Slant kind="last" />
    </div>
  )
}

function CommandLine() {
  return (
    <div className="border-t-[5px] border-[#555] bg-white text-[13px] leading-4">
      <div className="flex h-[22px] items-start border-b border-[#777]">
        <p className="-ml-[6px] flex-1">命令：</p>
        <span className="h-full w-[15px] bg-[#f0f0f0]" />
      </div>
      <label className="flex h-[21px] items-start">
        <span className="-ml-[6px]">命令：</span>
        <input aria-label="命令" className="min-w-0 flex-1 outline-none" />
      </label>
    </div>
  )
}

const modes = [
  { name: '捕捉', on: false },
  { name: '栅格', on: false },
  { name: '正交', on: false },
  { name: '极轴', on: true },
  { name: '对象捕捉', on: true },
  { name: '对象追踪', on: true },
  { name: '动态输入', on: true },
  { name: '线宽', on: false },
  { name: '模型', on: false },
  { name: '特性', on: false },
]

function StatusBar() {
  return (
    <footer className="flex h-4 items-start overflow-hidden bg-linear-to-b from-[#d5d9df] to-[#a9aeb8] pt-px text-[14px] leading-[18px] text-[#222]">
      <p className="h-6 w-[209px] shrink-0 border-r border-[#888] pt-px text-[12px]">285.3149,224.8183,0</p>
      <label className="relative ml-[2px] flex h-6 w-[71px] shrink-0 items-start border border-[#999] bg-white">
        <select aria-label="标高" className="w-full appearance-none px-[2px] text-[13px] leading-[18px] outline-none">
          <option>0</option>
        </select>
        <ChevronDown size={12} className="absolute right-1 top-1 text-[#666]" />
      </label>
      <button className="ml-1 h-6 shrink-0 border-r border-[#888] px-px pb-1">图纸比例</button>
      <button className="ml-1 flex h-6 w-[54px] items-start justify-between bg-[#e8eaed] px-[6px] text-[13px] text-[#777]">
        1:1
        <span className="pt-2">
          <Caret big />
        </span>
      </button>
      <div className="ml-[6px] flex gap-[5px]">
        {modes.map((m) => (
          <button
            key={m.name}
            className={clsx(
              'h-6 border-r border-[#888] px-px pb-1 whitespace-nowrap',
              m.on ? 'bg-[#b4b9c2]' : 'bg-[#c9cdd4]',
            )}
          >
            {m.name}
          </button>
        ))}
      </div>
      <label className="relative ml-auto mr-3 flex h-6 w-[110px] shrink-0 items-start border border-[#999] bg-white">
        <select aria-label="界面" className="w-full appearance-none px-[7px] text-[12px] leading-[18px] outline-none">
          <option>V8界面</option>
        </select>
        <ChevronDown size={12} className="absolute right-1 top-1 text-[#666]" />
      </label>
    </footer>
  )
}

export default function App() {
  return (
    <div className="relative flex h-screen flex-col overflow-hidden bg-[#f0f0f0] font-['Noto_Sans','Noto_Sans_CJK_SC',sans-serif] text-[#1c1c1c]">
      <Header />
      <Ribbon />
      <DocumentTabs />
      <Canvas />
      <LayoutTabs />
      <CommandLine />
      <StatusBar />
      <PartDialog />
    </div>
  )
}
